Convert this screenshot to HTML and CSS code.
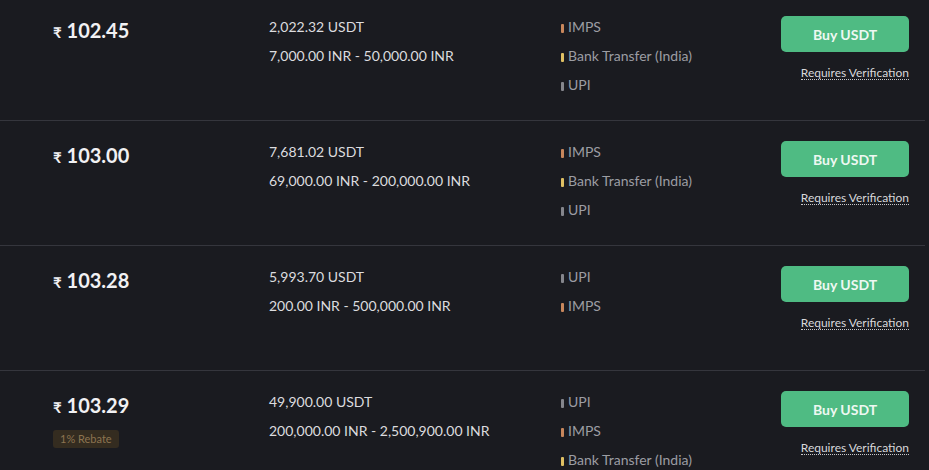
FILE: index.html
```html
<!DOCTYPE html>
<html lang="en">
<head>
  <meta charset="UTF-8">
  <meta name="viewport" content="width=device-width, initial-scale=1.0">
  <title>P2P Buy USDT</title>
  <link rel="stylesheet" href="styles.css">
</head>
<body>

  <div class="offers">

    <div class="offer">
      <div class="price"><span class="rupee">₹</span> 102.45</div>
      <div class="amounts">
        <div>2,022.32 USDT</div>
        <div>7,000.00 INR - 50,000.00 INR</div>
      </div>
      <div class="methods">
        <div class="method imps">IMPS</div>
        <div class="method bank">Bank Transfer (India)</div>
        <div class="method upi">UPI</div>
      </div>
      <div class="action">
        <button class="buy">Buy USDT</button>
        <span class="verify">Requires Verification</span>
      </div>
    </div>

    <div class="offer">
      <div class="price"><span class="rupee">₹</span> 103.00</div>
      <div class="amounts">
        <div>7,681.02 USDT</div>
        <div>69,000.00 INR - 200,000.00 INR</div>
      </div>
      <div class="methods">
        <div class="method imps">IMPS</div>
        <div class="method bank">Bank Transfer (India)</div>
        <div class="method upi">UPI</div>
      </div>
      <div class="action">
        <button class="buy">Buy USDT</button>
        <span class="verify">Requires Verification</span>
      </div>
    </div>

    <div class="offer">
      <div class="price"><span class="rupee">₹</span> 103.28</div>
      <div class="amounts">
        <div>5,993.70 USDT</div>
        <div>200.00 INR - 500,000.00 INR</div>
      </div>
      <div class="methods">
        <div class="method upi">UPI</div>
        <div class="method imps">IMPS</div>
      </div>
      <div class="action">
        <button class="buy">Buy USDT</button>
        <span class="verify">Requires Verification</span>
      </div>
    </div>

    <div class="offer">
      <div class="price-col">
        <div class="price"><span class="rupee">₹</span> 103.29</div>
        <span class="rebate">1% Rebate</span>
      </div>
      <div class="amounts">
        <div>49,900.00 USDT</div>
        <div>200,000.00 INR - 2,500,900.00 INR</div>
      </div>
      <div class="methods">
        <div class="method upi">UPI</div>
        <div class="method imps">IMPS</div>
        <div class="method bank">Bank Transfer (India)</div>
      </div>
      <div class="action">
        <button class="buy">Buy USDT</button>
        <span class="verify">Requires Verification</span>
      </div>
    </div>

  </div>

</body>
</html>
```

FILE: styles.css
```css
body {
  font-family: 'Lato', sans-serif;
  background-color: #1a1b20;
  color: #e4e4e6;
  margin: 0;
  overflow: hidden;
}

.offers {
  width: 925px;
  margin-top: -4px;
}

.offer {
  display: grid;
  grid-template-columns: 216px 292px 1fr 128px;
  align-items: start;
  height: 104px;
  padding: 20px 16px 0 53px;
  border-bottom: 1px solid #35363d;
}

.price {
  font-size: 20px;
  font-weight: 700;
  line-height: 28px;
  color: #f1f1f3;
}

.rupee {
  font-size: 15px;
}

.rebate {
  display: inline-block;
  margin-top: 9px;
  padding: 0 7px;
  height: 18px;
  line-height: 18px;
  font-size: 11px;
  color: #8c7450;
  background-color: #342c20;
  border-radius: 3px;
}

.amounts {
  display: flex;
  flex-direction: column;
  gap: 7px;
  font-size: 14px;
  line-height: 22px;
  color: #dcdcdf;
}

.methods {
  display: flex;
  flex-direction: column;
  gap: 7px;
  font-size: 14px;
  line-height: 22px;
  color: #9c9da3;
}

.method::before {
  content: '';
  display: inline-block;
  width: 3px;
  height: 9px;
  border-radius: 1px;
  margin-right: 4px;
  vertical-align: -1px;
  background-color: #85868c;
}

.method.imps::before {
  background-color: #c8875c;
}

.method.bank::before {
  background-color: #dfc063;
}

.action {
  display: flex;
  flex-direction: column;
  align-items: flex-end;
}

.buy {
  width: 128px;
  height: 36px;
  border: none;
  border-radius: 5px;
  background-color: #4fbb83;
  color: #eef8f2;
  font-family: 'Lato', sans-serif;
  font-size: 14px;
  font-weight: 700;
  cursor: pointer;
}

.verify {
  margin-top: 14px;
  font-size: 12px;
  line-height: 13px;
  color: #d8d8db;
  border-bottom: 1px dotted #c8c8cc;
}
```
